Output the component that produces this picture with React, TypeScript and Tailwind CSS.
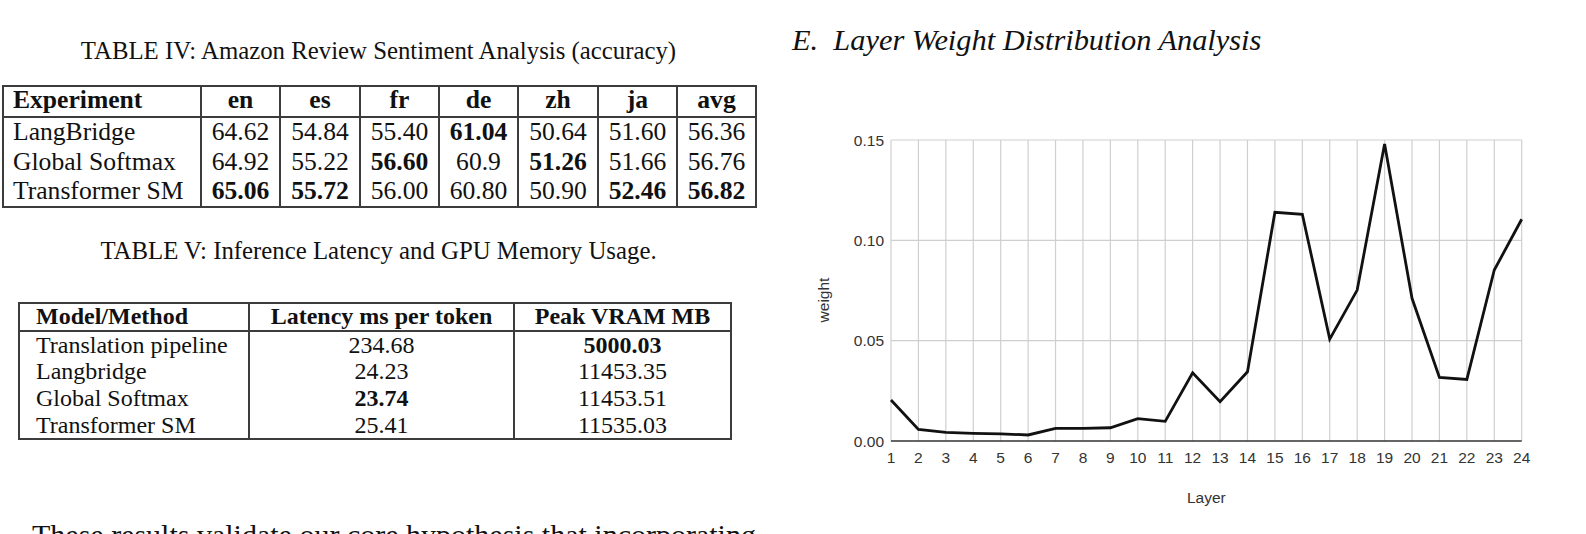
const sentimentCols = ["en", "es", "fr", "de", "zh", "ja", "avg"];

const sentimentRows = [
  {
    name: "LangBridge",
    vals: ["64.62", "54.84", "55.40", "61.04", "50.64", "51.60", "56.36"],
    bold: [3],
  },
  {
    name: "Global Softmax",
    vals: ["64.92", "55.22", "56.60", "60.9", "51.26", "51.66", "56.76"],
    bold: [2, 4],
  },
  {
    name: "Transformer SM",
    vals: ["65.06", "55.72", "56.00", "60.80", "50.90", "52.46", "56.82"],
    bold: [0, 1, 5, 6],
  },
];

const latencyRows = [
  { name: "Translation pipeline", vals: ["234.68", "5000.03"], bold: [1] },
  { name: "Langbridge", vals: ["24.23", "11453.35"], bold: [] as number[] },
  { name: "Global Softmax", vals: ["23.74", "11453.51"], bold: [0] },
  { name: "Transformer SM", vals: ["25.41", "11535.03"], bold: [] as number[] },
];

// layer weights read off the plot
const weights = [
  0.0204, 0.0058, 0.0043, 0.0038, 0.0036, 0.003, 0.0063, 0.0063, 0.0066,
  0.0111, 0.0098, 0.034, 0.0196, 0.0345, 0.114, 0.113, 0.0508, 0.0752, 0.148,
  0.0711, 0.0317, 0.0307, 0.0852, 0.1105,
];

const X0 = 891;
const X1 = 1521.7;
const Y0 = 441;
const Y1 = 140;
const xAt = (i: number) => X0 + (i * (X1 - X0)) / 23;
const yAt = (v: number) => Y0 - (v / 0.15) * (Y0 - Y1);

function WeightChart() {
  const points = weights.map((w, i) => `${xAt(i)},${yAt(w)}`).join(" ");
  return (
    <svg
      viewBox="800 120 786 414"
      width={786}
      height={414}
      className="block font-['Liberation_Sans',Arial,sans-serif]"
    >
      {[0.05, 0.1, 0.15].map((v) => (
        <line
          key={v}
          x1={X0}
          x2={X1}
          y1={yAt(v)}
          y2={yAt(v)}
          stroke="#cfcfcf"
          strokeWidth={1.2}
        />
      ))}
      {weights.map((_, i) => (
        <line
          key={i}
          x1={xAt(i)}
          x2={xAt(i)}
          y1={Y1}
          y2={Y0}
          stroke="#cfcfcf"
          strokeWidth={1.2}
        />
      ))}
      <line x1={X0} x2={X1} y1={Y0} y2={Y0} stroke="#333" strokeWidth={1.6} />

      {["0.00", "0.05", "0.10", "0.15"].map((t, i) => (
        <text
          key={t}
          x={884}
          y={yAt(i * 0.05)}
          textAnchor="end"
          dominantBaseline="central"
          fontSize={15.5}
          fill="#333"
        >
          {t}
        </text>
      ))}
      {weights.map((_, i) => (
        <text
          key={i}
          x={xAt(i)}
          y={457}
          textAnchor="middle"
          dominantBaseline="central"
          fontSize={15.5}
          fill="#333"
        >
          {i + 1}
        </text>
      ))}
      <text
        x={823}
        y={300}
        transform="rotate(-90 823 300)"
        textAnchor="middle"
        dominantBaseline="central"
        fontSize={15.5}
        fill="#333"
      >
        weight
      </text>
      <text
        x={(X0 + X1) / 2}
        y={497}
        textAnchor="middle"
        dominantBaseline="central"
        fontSize={15.5}
        fill="#333"
      >
        Layer
      </text>

      <polyline
        points={points}
        fill="none"
        stroke="#111"
        strokeWidth={2.8}
        strokeLinejoin="miter"
      />
    </svg>
  );
}

export default function App() {
  return (
    <div className="w-[1586px] h-[534px] overflow-hidden bg-white flex text-[#111] font-['Liberation_Serif','Times_New_Roman',serif]">
      <div className="w-[757px] shrink-0 flex flex-col">
        <div className="mt-[37px] h-[28px] leading-[28px] text-[24.8px] text-center">
          TABLE IV: Amazon Review Sentiment Analysis (accuracy)
        </div>

        <table className="mt-[20px] ml-[2px] w-[753px] table-fixed border-collapse border-2 border-[#3c3c3c] text-[25.6px] leading-none">
          <colgroup>
            <col className="w-[198px]" />
            <col className="w-[79px]" />
            <col className="w-[80px]" />
            <col className="w-[79px]" />
            <col className="w-[79px]" />
            <col className="w-[80px]" />
            <col className="w-[79px]" />
            <col className="w-[79px]" />
          </colgroup>
          <thead>
            <tr className="h-[29px] border-b-2 border-[#3c3c3c]">
              <th className="text-left pl-[9px] p-0 pb-[3px] font-bold">
                Experiment
              </th>
              {sentimentCols.map((c) => (
                <th
                  key={c}
                  className="border-l-2 border-[#3c3c3c] p-0 pb-[3px] text-center font-bold"
                >
                  {c}
                </th>
              ))}
            </tr>
          </thead>
          <tbody>
            {sentimentRows.map((row) => (
              <tr key={row.name} className="h-[30px]">
                <td className="text-left pl-[9px] p-0 whitespace-nowrap">
                  {row.name}
                </td>
                {row.vals.map((v, j) => (
                  <td
                    key={j}
                    className={
                      "border-l-2 border-[#3c3c3c] p-0 text-center " +
                      (row.bold.includes(j) ? "font-bold" : "")
                    }
                  >
                    {v}
                  </td>
                ))}
              </tr>
            ))}
          </tbody>
        </table>

        <div className="mt-[29px] h-[28px] leading-[28px] text-[24.8px] text-center">
          TABLE V: Inference Latency and GPU Memory Usage.
        </div>

        <table className="mt-[37px] ml-[18px] w-[712px] table-fixed border-collapse border-2 border-[#3c3c3c] text-[24px] leading-none">
          <colgroup>
            <col className="w-[230px]" />
            <col className="w-[265px]" />
            <col className="w-[217px]" />
          </colgroup>
          <thead>
            <tr className="h-[27px] border-b-2 border-[#3c3c3c]">
              <th className="text-left pl-[16px] p-0 pb-[2px] font-bold">
                Model/Method
              </th>
              <th className="border-l-2 border-[#3c3c3c] p-0 pb-[2px] text-center font-bold">
                Latency ms per token
              </th>
              <th className="border-l-2 border-[#3c3c3c] p-0 pb-[2px] text-center font-bold">
                Peak VRAM MB
              </th>
            </tr>
          </thead>
          <tbody>
            {latencyRows.map((row) => (
              <tr key={row.name} className="h-[27px]">
                <td className="text-left pl-[16px] p-0 whitespace-nowrap">
                  {row.name}
                </td>
                {row.vals.map((v, j) => (
                  <td
                    key={j}
                    className={
                      "border-l-2 border-[#3c3c3c] p-0 text-center " +
                      (row.bold.includes(j) ? "font-bold" : "")
                    }
                  >
                    {v}
                  </td>
                ))}
              </tr>
            ))}
          </tbody>
        </table>

        <p className="mt-[80px] ml-[32px] text-[30px] leading-[30px] whitespace-nowrap">
          These results validate our core hypothesis that incorporating
        </p>
      </div>

      <div className="flex-1 flex flex-col">
        <h3 className="mt-[22px] ml-[35px] h-[36px] leading-[36px] text-[30.4px] italic font-normal">
          E.&nbsp; Layer Weight Distribution Analysis
        </h3>
        <div className="mt-[62px] ml-[43px]">
          <WeightChart />
        </div>
      </div>
    </div>
  );
}
